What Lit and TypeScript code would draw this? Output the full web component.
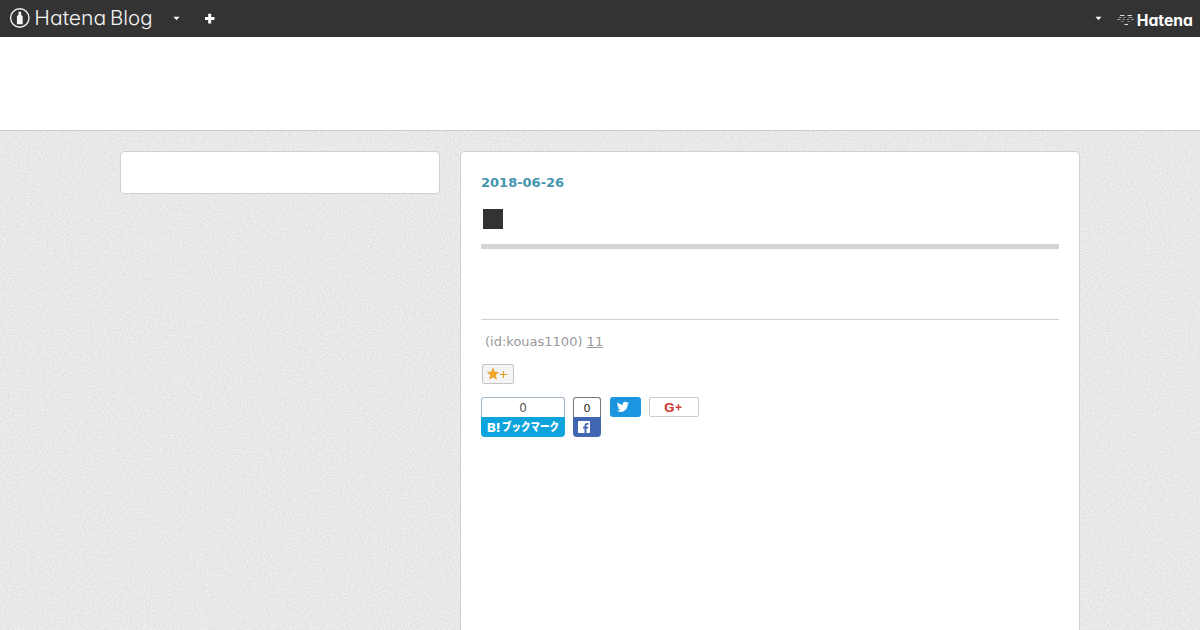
import { LitElement, html, css } from "lit";
import { customElement } from "lit/decorators.js";

@customElement("global-header")
class GlobalHeader extends LitElement {
  static styles = css`
    :host { display: flex; justify-content: space-between; height: 37px; background: #333; color: #fff; overflow: hidden; }
    .group { display: flex; align-items: flex-start; }
    svg { display: block; }
    text { fill: #fff; font-family: Inter, "Liberation Sans", sans-serif; font-feature-settings: "cv11"; }
    .light { font-weight: 300; font-size: 20px; fill: #f4f4f4; }
    .bold { font-weight: 700; font-size: 15.5px; }
  `;
  render() {
    return html`
      <div class="group">
        <svg width="230" height="37" viewBox="0 0 230 37">
          <circle cx="19.8" cy="18" r="9.2" fill="none" stroke="#f0f0f0" stroke-width="1.4" />
          <path d="M18.5 11.8h2.6v2.6l1.6 2.1v7.800h-5.800v-7.800l1.600-2.100z" fill="#f4f4f4" />
          <text class="light" x="34.3" y="25" textLength="72" lengthAdjust="spacingAndGlyphs">Hatena</text>
          <text class="light" x="110" y="25" textLength="42.5" lengthAdjust="spacingAndGlyphs">Blog</text>
          <path d="M173.5 16.800h6l-3 3.400z" fill="#fff" />
          <path d="M208.2 13.800h3v3.300h3.300v3h-3.300v3.300h-3v-3.300H205v-3h3.200z" fill="#fff" />
        </svg>
      </div>
      <div class="group">
        <svg width="120" height="37" viewBox="0 0 120 37">
          <path d="M15.500 16.800h6l-3 3.400z" fill="#fff" />
          <g fill="none" stroke="#ddd" stroke-width="1.100">
            <path d="M40 15.500h4.500M47.500 15.500h4.500" />
            <path d="M39 17.500h2.500M43.500 17.500h2M48.500 17.500h4" stroke="#999" />
            <path d="M37 19.500h3.500M42.500 19.500h2M47 19.500h2M51 19.500h3" stroke="#999" />
            <path d="M41 21.500h3M47.500 21.500h3" stroke="#777" />
            <path d="M44.500 24.500h3.500" />
          </g>
          <text class="bold" x="56.800" y="26" textLength="56" lengthAdjust="spacingAndGlyphs">Hatena</text>
        </svg>
      </div>
    `;
  }
}

@customElement("share-buttons")
class ShareButtons extends LitElement {
  static styles = css`
    :host { display: flex; align-items: flex-start; height: 40px; }
    svg { display: block; overflow: visible; }
    .box { box-sizing: border-box; border-radius: 3px; }
    .count { box-sizing: border-box; height: 20px; border: 1px solid #a6b9c9; border-bottom: 0; border-radius: 3px 3px 0 0; text-align: center; font: 12px/20px "DejaVu Sans", sans-serif; color: #555; }
    .bookmark { width: 84px; margin-right: 8px; }
    .label { height: 20px; background: #0da3dc; border-radius: 0 0 4px 4px; }
    .label text { fill: #fff; font-family: "Noto Sans CJK JP", sans-serif; font-weight: 900; font-size: 11px; }
    .label .b { font-family: Inter, sans-serif; font-weight: 800; font-size: 12px; }
    .facebook { width: 28px; margin-right: 9px; }
    .facebook .count { border-color: #777; color: #222; font-size: 11px; line-height: 21px; }
    .facebook .icon { height: 20px; background: #4267b2; border-radius: 0 0 4px 4px; }
    .twitter { width: 31px; height: 20px; background: #1b95e0; margin-right: 8px; }
    .google { width: 50px; height: 20px; border: 1px solid #ccc; border-radius: 2px; }
    .google text { fill: #d0443c; font-family: Roboto, sans-serif; font-weight: 700; font-size: 13px; }
  `;
  render() {
    return html`
      <div class="box bookmark">
        <div class="count">0</div>
        <div class="label">
          <svg width="84" height="20" viewBox="0 0 84 20">
            <text class="b" x="6" y="14.500" textLength="13.500" lengthAdjust="spacingAndGlyphs">B!</text>
            <text x="21" y="14" textLength="57" lengthAdjust="spacingAndGlyphs">ブックマーク</text>
          </svg>
        </div>
      </div>
      <div class="box facebook">
        <div class="count">0</div>
        <div class="icon">
          <svg width="28" height="20" viewBox="0 0 28 20">
            <rect x="5" y="4" width="12" height="12" rx="1" fill="#fff" />
            <path d="M11.500 16v-4.500H10V9.700h1.500V8.500c0-1.700 1-2.600 2.500-2.600l1.400.1v1.700h-1c-.8 0-1 .4-1 1v1h1.900l-.3 1.800h-1.600V16z" fill="#4267b2" />
          </svg>
        </div>
      </div>
      <div class="box twitter">
        <svg width="31" height="20" viewBox="0 0 31 20">
          <g transform="translate(6.200 3.500) scale(.54)">
            <path fill="#fff" d="M23.600 4.700c-.8.4-1.700.6-2.600.7.9-.6 1.700-1.500 2-2.500-.9.5-1.900.9-2.900 1.100A4.600 4.600 0 0 0 12.100 8.200C8.300 8 5 6.200 2.700 3.400c-1.200 2-.6 4.800 1.400 6.200-.7 0-1.400-.2-2.100-.6 0 2.200 1.500 4.200 3.700 4.700-.7.200-1.400.2-2.100.1.600 1.800 2.300 3.200 4.300 3.200A9.400 9.400 0 0 1 1 19c2 1.300 4.500 2.100 7.100 2.100 8.600 0 13.500-7.300 13.200-14 .9-.7 1.700-1.500 2.300-2.400z" />
          </g>
        </svg>
      </div>
      <div class="box google">
        <svg width="48" height="18" viewBox="0 0 48 18">
          <text x="14" y="13.700" textLength="10.500" lengthAdjust="spacingAndGlyphs">G</text>
          <path d="M28.500 6.300v6M25.500 9.300h6" stroke="#d0443c" stroke-width="1.500" />
        </svg>
      </div>
    `;
  }
}

@customElement("app-root")
class AppRoot extends LitElement {
  static styles = css`
    :host { display: flex; flex-direction: column; height: 630px; overflow: hidden; background: #fff; font-family: "DejaVu Sans", sans-serif; font-size: 13px; }
    .title { box-sizing: border-box; height: 94px; border-bottom: 1px solid #ccc; background: #fff; }
    .page { position: relative; flex: 1; min-height: 0; overflow: hidden; background: #e8e8e8; }
    .grain { position: absolute; inset: 0; width: 100%; height: 100%; }
    .columns { position: relative; display: flex; align-items: flex-start; gap: 20px; width: 960px; margin: 20px auto 0; }
    .card { box-sizing: border-box; background: #fff; border: 1px solid #d0d0d0; border-radius: 4px; }
    .side { width: 320px; height: 43px; }
    .main { width: 620px; height: 520px; padding: 23px 20px 0; }
    .date { font-size: 13px; font-weight: bold; line-height: 16px; color: #4296af; }
    .entry { box-sizing: border-box; display: flex; margin-top: 17px; height: 41px; border-bottom: 5px solid #d4d4d4; }
    .square { width: 20px; height: 20px; margin: 1px 0 0 2px; background: #333; }
    .foot { margin-top: 70px; border-top: 1px solid #d0d0d0; padding: 14px 0 0 4px; line-height: 16px; color: #999; }
    .stamp { text-decoration: underline; }
    .star { box-sizing: border-box; width: 32px; height: 20px; margin: 14px 0 13px 1px; border: 1px solid #c4c4c4; border-radius: 2px; background: #f4f4f4; }
    svg { display: block; }
  `;
  render() {
    return html`
      <global-header></global-header>
      <div class="title"></div>
      <div class="page">
        <svg class="grain">
          <filter id="grain" x="0" y="0" width="100%" height="100%" color-interpolation-filters="sRGB">
            <feTurbulence type="fractalNoise" baseFrequency=".7" numOctaves="2" seed="4" />
            <feColorMatrix values=".13 0 0 0 .846  .13 0 0 0 .846  .13 0 0 0 .846  0 0 0 0 1" />
          </filter>
          <rect width="100%" height="100%" filter="url(#grain)" />
        </svg>
        <div class="columns">
          <div class="card side"></div>
          <div class="card main">
            <div class="date">2018-06-26</div>
            <div class="entry"><div class="square"></div></div>
            <div class="foot">(id:kouas1100) <span class="stamp">11</span></div>
            <div class="star">
              <svg width="30" height="18" viewBox="0 0 30 18">
                <path d="M10 3.200l1.500 3.900 4.100.3-3.200 2.600 1.100 4.100-3.500-2.200-3.500 2.200 1.100-4.100-3.200-2.600 4.100-.3z" fill="#f5a623" stroke="#d88c12" stroke-width=".5" />
                <path d="M20.500 6v7M17 9.500h7" stroke="#e0971c" stroke-width="1" />
              </svg>
            </div>
            <share-buttons></share-buttons>
          </div>
        </div>
      </div>
    `;
  }
}
